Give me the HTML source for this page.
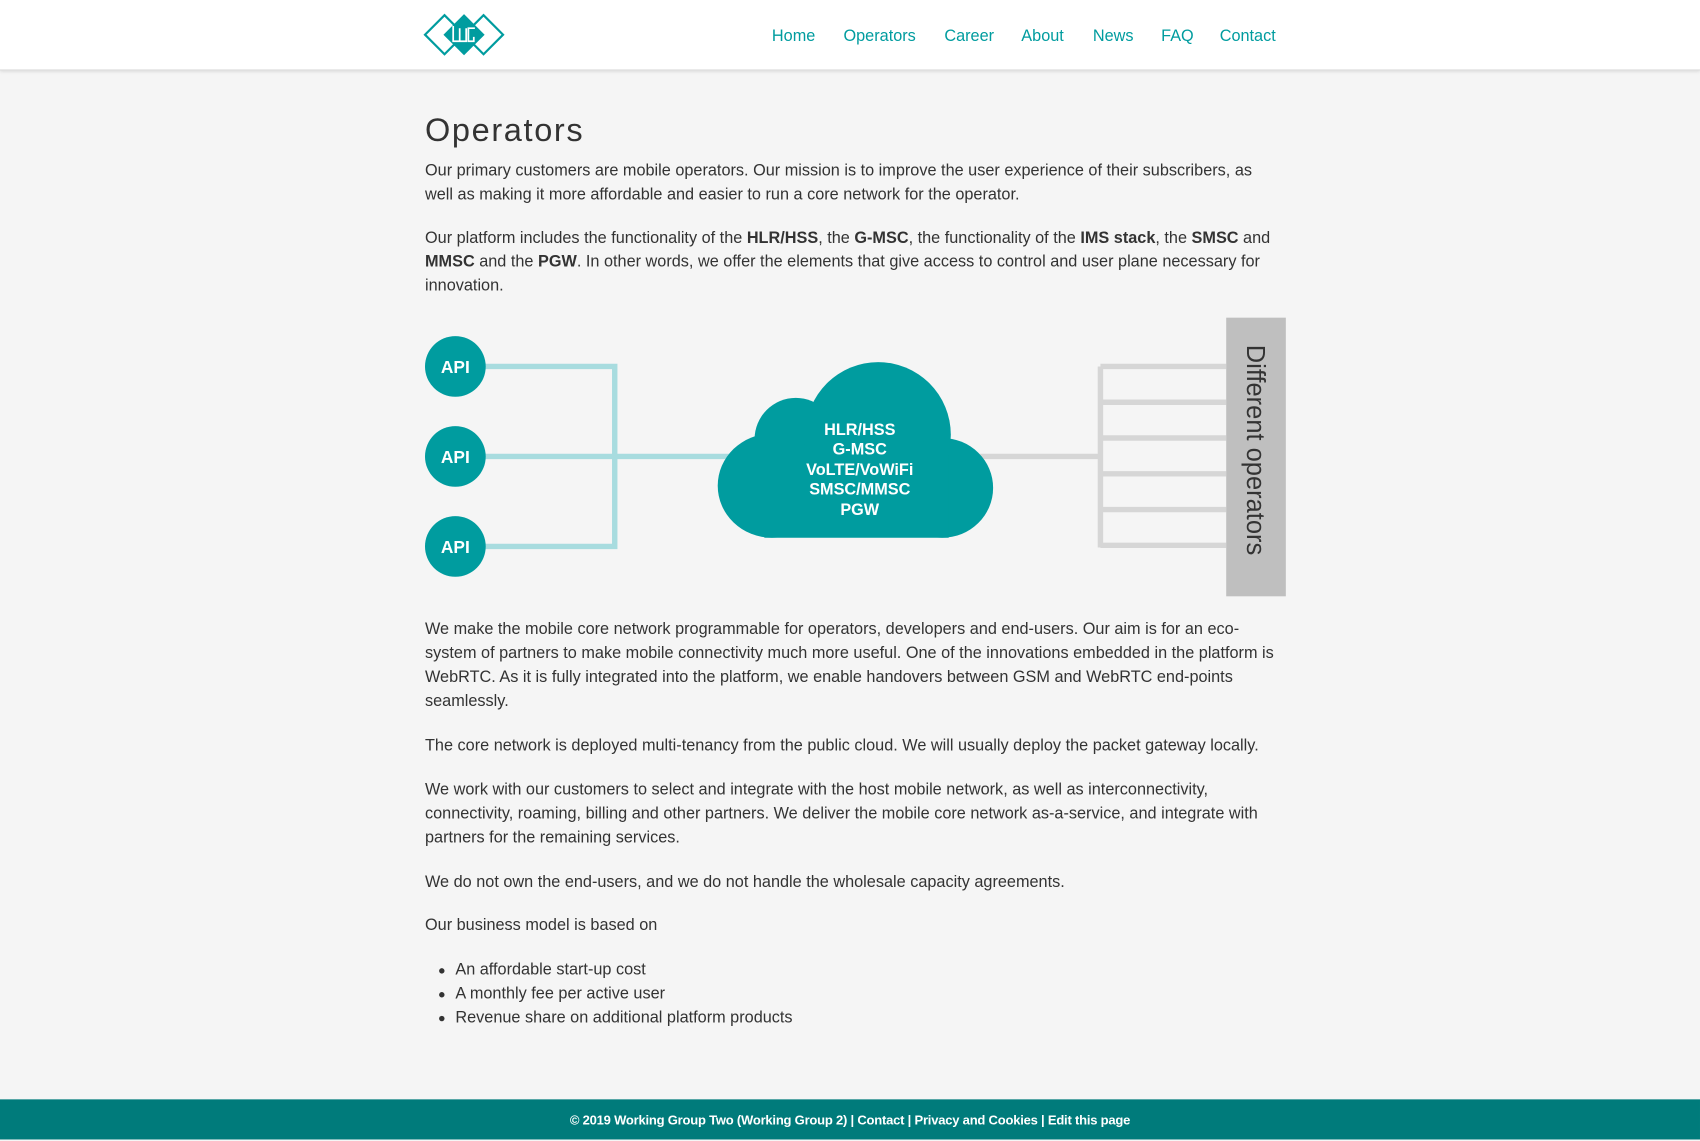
<!DOCTYPE html>
<html><head><meta charset="utf-8">
<style>
html,body{margin:0;padding:0;width:1700px;height:1139px;overflow:hidden;background:#f5f5f5;}
#w{position:absolute;left:0;top:0;width:1568px;height:1051px;transform:scale(1.08418);transform-origin:0 0;font-family:"Liberation Sans",sans-serif;color:#333;}
.hdr{position:absolute;left:0;top:0;width:1568px;height:64px;background:#fff;border-bottom:1px solid #ddd;box-shadow:0 1px 3px rgba(0,0,0,.12);}
.nav a{position:absolute;top:25px;font-size:15px;color:#009c9f;text-decoration:none;line-height:18px;}
h1{position:absolute;left:392px;top:101px;margin:0;font-size:30px;font-weight:normal;letter-spacing:1.5px;color:#333;line-height:40px;}
.t{position:absolute;left:392px;width:792px;font-size:15px;line-height:22px;margin:0;}
.t b{font-weight:bold;}
ul.t{padding-left:0;list-style:none}
ul.t li{position:relative;padding-left:28px}
ul.t li:before{content:"";position:absolute;left:13px;top:9px;width:5px;height:5px;border-radius:50%;background:#333}
.ft{position:absolute;left:0;top:1014px;width:1568px;height:37px;background:#007b7b;color:#fff;font-size:12px;font-weight:bold;text-align:center;line-height:38px;letter-spacing:-0.2px;}
</style></head><body><div id="w">
<div class="hdr"></div>
<svg style="position:absolute;left:390px;top:11px" width="80" height="44" viewBox="390 11 80 44">
<polygon points="410,14 428,32 410,50 392,32" fill="none" stroke="#009c9f" stroke-width="2"/>
<polygon points="446,14 464,32 446,50 428,32" fill="none" stroke="#009c9f" stroke-width="2"/>
<polygon points="428,13 447,32 428,51 409,32" fill="#009c9f"/>
<path d="M418,24 V38 H424 V26 M424,38 H430 V26 M432,30 V26 H438 M432,30 V38 H437 V34" fill="none" stroke="#fff" stroke-width="1.6"/>
</svg>
<div class="nav">
<a style="left:712px">Home</a><a style="left:778px">Operators</a><a style="left:871px">Career</a><a style="left:942px">About</a><a style="left:1008px">News</a><a style="left:1071px">FAQ</a><a style="left:1125px">Contact</a>
</div>
<h1>Operators</h1>
<p class="t" style="top:147px">Our primary customers are mobile operators. Our mission is to improve the user experience of their subscribers, as well as making it more affordable and easier to run a core network for the operator.</p>
<p class="t" style="top:209px">Our platform includes the functionality of the <b>HLR/HSS</b>, the <b>G-MSC</b>, the functionality of the <b>IMS stack</b>, the <b>SMSC</b> and <b>MMSC</b> and the <b>PGW</b>. In other words, we offer the elements that give access to control and user plane necessary for innovation.</p>
<svg style="position:absolute;left:0;top:0" width="1568" height="600" viewBox="0 0 1568 600">
<g stroke="#a8dcdf" stroke-width="5" fill="none">
<path d="M445,338 H567 V504 H445 M445,421 H690"/>
</g>
<g fill="#009c9f">
<circle cx="420" cy="338" r="28"/><circle cx="420" cy="421" r="28"/><circle cx="420" cy="504" r="28"/>
</g>
<g fill="#fff" font-weight="bold" font-size="16" text-anchor="middle" font-family="Liberation Sans Narrow,Liberation Sans,sans-serif">
<text x="420" y="344">API</text><text x="420" y="427">API</text><text x="420" y="510">API</text>
</g>
<g stroke="#d6d6d6" stroke-width="5" fill="none">
<path d="M900,421 H1015 M1015,338 V505 M1015,338 H1131 M1015,371 H1131 M1015,404 H1131 M1015,437 H1131 M1015,470 H1131 M1015,503 H1131"/>
</g>
<g fill="#009c9f">
<circle cx="810" cy="401" r="67"/>
<circle cx="734" cy="405" r="38"/>
<ellipse cx="712" cy="448" rx="50" ry="48"/>
<ellipse cx="869" cy="450" rx="47" ry="46"/>
<rect x="705" y="420" width="170" height="76"/>
</g>
<g fill="#fff" font-weight="bold" font-size="15" text-anchor="middle" font-family="Liberation Sans Narrow,Liberation Sans,sans-serif">
<text x="793" y="401">HLR/HSS</text><text x="793" y="419">G-MSC</text><text x="793" y="438">VoLTE/VoWiFi</text><text x="793" y="456">SMSC/MMSC</text><text x="793" y="475">PGW</text>
</g>
<rect x="1131" y="293" width="55" height="257" fill="#bfbfbf"/>
<text x="0" y="0" transform="translate(1150,318) rotate(90)" font-size="23.5" fill="#333" font-family="Liberation Sans,sans-serif">Different operators</text>
</svg>
<p class="t" style="top:570px">We make the mobile core network programmable for operators, developers and end-users. Our aim is for an eco-system of partners to make mobile connectivity much more useful. One of the innovations embedded in the platform is WebRTC. As it is fully integrated into the platform, we enable handovers between GSM and WebRTC end-points seamlessly.</p>
<p class="t" style="top:677px">The core network is deployed multi-tenancy from the public cloud. We will usually deploy the packet gateway locally.</p>
<p class="t" style="top:718px">We work with our customers to select and integrate with the host mobile network, as well as interconnectivity, connectivity, roaming, billing and other partners. We deliver the mobile core network as-a-service, and integrate with partners for the remaining services.</p>
<p class="t" style="top:803px">We do not own the end-users, and we do not handle the wholesale capacity agreements.</p>
<p class="t" style="top:843px">Our business model is based on</p>
<ul class="t" style="top:884px;margin:0">
<li>An affordable start-up cost</li><li>A monthly fee per active user</li><li>Revenue share on additional platform products</li>
</ul>
<div class="ft">© 2019 Working Group Two (Working Group 2) | Contact | Privacy and Cookies | Edit this page</div>
</div></body></html>
